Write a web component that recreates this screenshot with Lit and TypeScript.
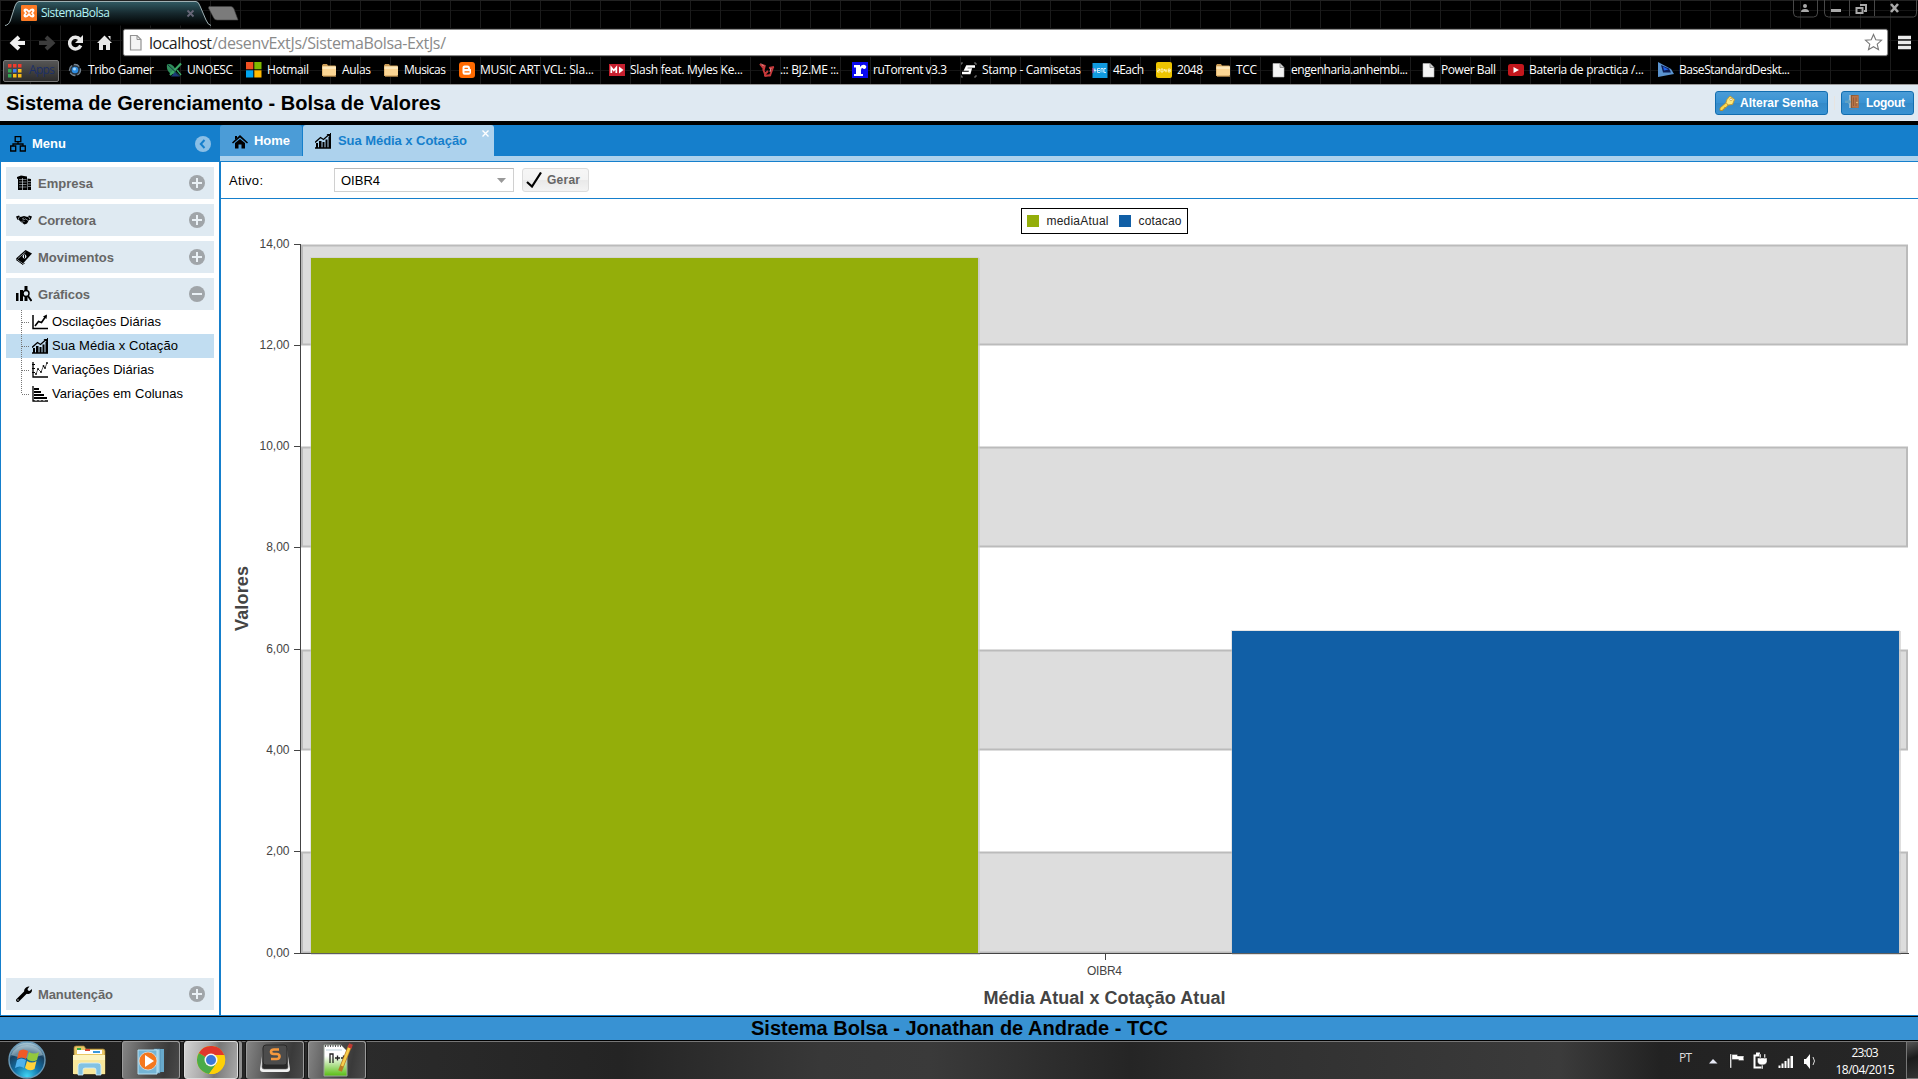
import { LitElement, html, svg, css, TemplateResult } from "lit";
import { customElement, property } from "lit/decorators.js";
import { classMap } from "lit/directives/class-map.js";

const icon = (body: TemplateResult, w = 16, h = 16) =>
  html`<svg width=${w} height=${h} viewBox="0 0 ${w} ${h}">${body}</svg>`;

const folder = svg`<path d="M1 3.5 2 2h4l1 1.5h7.5V14H1z" fill="#c99a55"/><path d="M1.500 4.500H15V13.500H1.500z" fill="#fbd593"/><path d="M1.500 4.500H15V7H1.500z" fill="#fde6b8"/><path d="M2 14.500h13" stroke="#8a6a3a"/>`;
const page = svg`<path d="M3 1.500h7l4 4V15H3z" fill="#f4f4f4" stroke="#bbb" stroke-width=".6"/><path d="M10 1.500v4h4" fill="#ccc" stroke="#888" stroke-width=".8"/>`;
const growth = svg`<path d="M0 15h16" stroke="#000" stroke-width="1.500"/><path d="M1 10h2v5H1zM4 8h2.500v7H4zM7.500 9h2v6h-2zM10.500 6.500h2V15h-2zM13.500 4H15v11h-1.500z"/><path d="M0 9.500 5.500 4.500 8.500 6.500l5-4.500" fill="none" stroke="#000" stroke-width="1.300"/><path d="M11.500 1H15v3.500z"/><path d="M15.500 0v15" stroke="#000"/>`;

/** Single line of text spread over a given advance width. */
@customElement("fit-text")
class FitText extends LitElement {
  @property({ type: Number }) w = 0;
  @property() text = "";
  static styles = css`
    :host { display: inline-block; white-space: pre; }
    span { display: inline-block; }
  `;
  firstUpdated() {
    const el = this.renderRoot.querySelector("span") as HTMLElement;
    const n = this.text.length - 1;
    if (this.w && n > 0) {
      const gap = (this.w - el.getBoundingClientRect().width) / n;
      el.style.letterSpacing = `${gap}px`;
      el.style.marginRight = `${-gap}px`;
    }
  }
  render() {
    return html`<span>${this.text}</span>`;
  }
}

interface Bookmark { text: string; w: number; slot: number; art: TemplateResult; }

const bookmarks: Bookmark[] = [
  { text: "Tribo Gamer", w: 66, slot: 99, art: svg`<circle cx="8" cy="8" r="5.500" fill="#27323c" stroke="#76838f" stroke-width="1.300" stroke-dasharray="6 2"/><circle cx="8" cy="8" r="3.300" fill="#2d8be0"/><circle cx="7.500" cy="7" r="1.500" fill="#a5dbff"/>` },
  { text: "UNOESC", w: 46, slot: 80, art: svg`<path d="M1 2.500c3-1.500 6 0 8 4l1 6C4 13 0 9 1 2.500z" fill="#2f8c5a"/><path d="M15 1.500 4 13" stroke="#3aa866" stroke-width="2.200"/><path d="M9 10l5 4.500H5z" fill="#1b3a77"/><path d="M2 3l12 11" stroke="#123a40" stroke-width="1"/><path d="M11 8l4 5" stroke="#3aa866" stroke-width="1.300"/>` },
  { text: "Hotmail", w: 42, slot: 75, art: svg`<path d="M0 0h7.300v7.300H0z" fill="#f25022"/><path d="M8.300 0h7.200v7.300H8.300z" fill="#7fba00"/><path d="M0 8.300h7.300v7.200H0z" fill="#00a4ef"/><path d="M8.300 8.300h7.200v7.200H8.300z" fill="#ffb900"/>` },
  { text: "Aulas", w: 29, slot: 62, art: folder },
  { text: "Musicas", w: 42, slot: 76, art: folder },
  { text: "MUSIC ART VCL: Sla...", w: 114, slot: 150, art: svg`<rect width="16" height="16" rx="3" fill="#ff6a00"/><path d="M5.500 3.500h3q2.500 0 2.500 3 0 .7 1 .7v3.300q0 2.200-2.500 2.200h-4Q3.500 12.700 3.500 10.500v-5q0-2 2-2z" fill="#fff"/><path d="M6 6.300h2.500M6 9.900h4" stroke="#ff6a00" stroke-width="1.300" stroke-linecap="round"/>` },
  { text: "Slash feat. Myles Ke...", w: 113, slot: 150, art: svg`<rect y="2" width="16" height="12" fill="#c8202f"/><path d="M2.300 11V5.500L4.800 8.500 7.300 5.500V11" fill="none" stroke="#fff" stroke-width="1.700"/><path d="M10 4.500 14.500 8 10 11.500z" fill="#fff"/>` },
  { text: ".:: BJ2.ME ::.", w: 59, slot: 93, art: svg`<path d="M1 2l4 5 1-4M4 7l2 5 3-3M5 13.500h6l3-8M3 3l3 1M10 6l5-1M6 14l6-1" stroke="#c6383a" stroke-width="1.900" fill="none"/><path d="M2 1.500l3 3M12 6l-1 4" stroke="#f09a9a"/>` },
  { text: "ruTorrent v3.3", w: 74, slot: 109, art: svg`<rect width="16" height="16" fill="#0808f0"/><path d="M2 3h6v2q2-3 5-2 2 1 1 3-2 2-3.500 0-1.500 0-1.500 2v4h2v2H2v-2h2V5.500H2z" fill="#fff"/>` },
  { text: "Stamp - Camisetas", w: 99, slot: 131, art: svg`<path d="M0 3V1h2M13 1h2v2M15 13v2h-2M2 15H0v-2" stroke="#aaa" fill="none" stroke-width=".7"/><path d="M14 4.500H6L4.500 7.500h5L8.500 11H1" stroke="#fff" stroke-width="2.400" fill="none"/>` },
  { text: "4Each", w: 31, slot: 64, art: svg`<rect x=".5" y="1" width="15" height="15" fill="#109ae0"/><path d="M3 6.500v4M2 6.500v2h2.500M8 6.500H5.500v4H8M5.500 8.500H8M9 10.500v-4h2v4M14 6.500h-2v4h2" stroke="#d5efff" stroke-width=".9" fill="none"/><path d="M1 6v5" stroke="#d7308c"/>` },
  { text: "2048", w: 26, slot: 59, art: svg`<rect width="16" height="16" rx="2" fill="#edc400"/><path d="M1.500 7h2v1.500h-2V10h2M5 7h2v3H5zM8.500 7v1.800h2.300M10 7v3.300M12.200 7h2v3h-2zM12.200 8.500h2" stroke="#fff6c5" stroke-width=".9" fill="none"/>` },
  { text: "TCC", w: 21, slot: 55, art: folder },
  { text: "engenharia.anhembi...", w: 117, slot: 150, art: page },
  { text: "Power Ball", w: 55, slot: 88, art: page },
  { text: "Bateria de practica /...", w: 115, slot: 150, art: svg`<rect y="2" width="16" height="12" rx="2.500" fill="#c4171d"/><path d="M5.500 5 11 8l-5.500 3z" fill="#fff"/>` },
  { text: "BaseStandardDeskt...", w: 111, slot: 140, art: svg`<path d="M0 0 13 7 16 12 0 15z" fill="#5b94d0"/><path d="M3 3l8 3.500 2 4H5z" fill="#0c1c55"/><path d="M5 4.500l5.500 3-4.500 1z" fill="#1d5ee8"/>` },
];

@customElement("browser-chrome")
class BrowserChrome extends LitElement {
  static styles = css`
    :host {
      display: flex; flex-direction: column; height: 84px; border-bottom: 1px solid #9a9a9a; color: #fff;
      font-family: "Open Sans", "Noto Sans", sans-serif; font-size: 12px;
      background-color: #000;
      background-image: linear-gradient(90deg, #1b1b1b 1px, transparent 1px), linear-gradient(#151515 1px, transparent 1px);
      background-size: 30px 30px; background-position: 0 10px;
    }
    svg { display: block; flex: none; }
    .strip { display: flex; height: 28px; position: relative; box-sizing: border-box; border-top: 1px solid #222; }
    .tabs { position: absolute; left: 0; top: -1px; }
    .tab { display: flex; align-items: center; height: 24px; padding-left: 21px; position: relative; flex: 1; }
    .title { margin-left: 4px; color: #b4f3f4; width: 145px; font-size: 12px; }
    .win { margin-top: -1px; position: relative; }
    .bar { display: flex; height: 29px; align-items: center; }
    .nav { width: 123px; }
    .omni { flex: 1; height: 25px; background: #fff; border: 1px solid #8a8a8a; outline: 1px solid #111; border-radius: 2px; display: flex; align-items: center; font-size: 16px; color: #8a8a8a; }
    .omni .doc { margin: 0 6px 0 5px; }
    .omni b { color: #1d1d1d; font-weight: 400; }
    .omni .star { margin-left: auto; margin-right: 4px; }
    .menu { width: 30px; }
    .marks { display: flex; height: 27px; align-items: center; padding-left: 3px; }
    .marks fit-text { margin-top: -1px; }
    .apps { box-sizing: border-box; width: 56px; height: 22px; margin-right: 8px; border: 1px solid #777; border-radius: 2px; background: linear-gradient(#555, #2c2c2c); color: #1c2f66; display: flex; align-items: center; padding-left: 4px; gap: 7px; }
    .mark { display: flex; align-items: center; gap: 5px; flex: none; height: 22px; padding-bottom: 1px; }
  `;
  render() {
    const dots = ["#f03c2e", "#f03c2e", "#f03c2e", "#35a853", "#3d7ff0", "#f8bc18", "#35a853", "#f8bc18", "#f8bc18"];
    return html`
      <div class="strip">
        <svg class="tabs" width="242" height="27">
          <defs><linearGradient id="tg" x2="0" y2="1"><stop stop-color="#315a63"/><stop offset=".5" stop-color="#16282d"/><stop offset="1" stop-color="#000"/></linearGradient></defs>
          <path d="M5 25.500Q9 25 10.500 20L15 6Q16.500 1.500 19 1.500H196Q198.500 1.500 200 6L206 20Q208 25 211 25.500" fill="url(#tg)" stroke="#9fb0b3"/>
          <path d="M209 6.500h22q2 0 3 2.500l4 11h-21q-2.500 0-3.500-2.500L208.500 8z" fill="#7b7b7b" stroke="#444" stroke-width=".6"/>
        </svg>
        <div class="tab">
          ${icon(svg`<rect width="16" height="16" rx="1" fill="#fb7a24"/><path d="M4.500 3.500q2 0 3.500 2 1.500-2 3.500-2 2 0 2 2 0 1.300-1.500 2.500 1.500 1.200 1.500 2.500 0 2-2 2-2 0-3.500-2-1.500 2-3.500 2-2 0-2-2Q2.500 9.200 4 8 2.500 6.800 2.500 5.500q0-2 2-2z" fill="#fff"/><path d="M5 6l2 2-2 2M11 6 9 8l2 2" stroke="#fb7a24" stroke-width="1.300" fill="none"/>`)}
          <span class="title"><fit-text w="69" text="SistemaBolsa"></fit-text></span>
          ${icon(svg`<path d="M1.500 2.500l6 6M7.500 2.500l-6 6" stroke="#667" stroke-width="1.800"/>`, 10, 10)}
        </div>
        <svg class="win" width="126" height="19">
          <path d="M1.500 0v13q0 4 4 4h16q4 0 4-4V0M32.500 0v13q0 4 4 4h85q3 0 3-4V0M57.500 0v16M82.500 0v16" fill="none" stroke="#474747"/>
          <g fill="#a9a9a9"><circle cx="13" cy="6" r="2"/><path d="M9 12q0-3 4-3t4 3zM39 9h10v3H39z"/></g>
          <path d="M64.500 8h6v5h-6zM68 5h6v6h-2" fill="none" stroke="#a9a9a9" stroke-width="2"/>
          <path d="M99 4l7 8M106 4l-7 8" stroke="#a9a9a9" stroke-width="2.600"/>
        </svg>
      </div>
      <div class="bar">
        <svg class="nav" height="29">
          <g fill="none" stroke-width="4"><path d="M25 15H13M19 9l-6.500 6 6.500 6" stroke="#f0f0f0"/><path d="M39 15h12M46 9l6.500 6-6.500 6" stroke="#3c3c3c"/><path d="M80 11.500a5.800 5.800 0 1 0 .700 6" stroke="#e8e8e8" stroke-width="3.500"/></g>
          <path d="M83 7v8h-8z" fill="#e8e8e8"/>
          <path d="M104.500 7.500 112 15h-2v7h-4v-5h-3v5h-4v-7h-2zM108 8h2.500v4z" fill="#e8e8e8"/>
        </svg>
        <div class="omni">
          <svg class="doc" width="14" height="18"><path d="M1.500 1.500H8L12 5.500V16H1.500z" fill="#f4f4f4" stroke="#929292" stroke-width="1.200"/><path d="M8 1.500v4h4" fill="none" stroke="#929292"/></svg>
          <b><fit-text w="63" text="localhost"></fit-text></b><fit-text w="234" text="/desenvExtJs/SistemaBolsa-ExtJs/"></fit-text>
          <svg class="star" width="19" height="19"><path d="M9.500 1.500l2.300 5.300 5.700.5-4.300 3.800 1.300 5.600-5-3-5 3 1.300-5.600L1.500 7.300l5.700-.5z" fill="#fff" stroke="#777" stroke-width="1.100"/></svg>
        </div>
        <svg class="menu" height="29"><path d="M10 9.500h13M10 14.500h13M10 19.500h13" stroke="#eaeaea" stroke-width="3.700"/></svg>
      </div>
      <div class="marks">
        <div class="apps">
          ${icon(svg`${dots.map((c, i) => svg`<rect x=${(i % 3) * 5} y=${Math.floor(i / 3) * 5} width="3.500" height="3.500" fill=${c}/>`)}`, 14, 14)}
          <fit-text w="26" text="Apps"></fit-text>
        </div>
        ${bookmarks.map((b) => html`<div class="mark" style="width:${b.slot}px">${icon(b.art)}<fit-text .w=${b.w} .text=${b.text}></fit-text></div>`)}
      </div>`;
  }
}

const sectionIcons: Record<string, TemplateResult> = {
  Empresa: svg`<path d="M1 2 5 .500l6 1V15H2V4L1 3.500zM11.500 3.500 15 4v11h-3.500z"/><path d="M3 4.500h7.500M3 7h7.500M3 9.500h7.500M3 12h7.500M12 6.500h3M12 9h3M12 11.500h3" stroke="#dfeaf2" stroke-width=".5"/><path d="M6.500 3v12" stroke="#dfeaf2" stroke-width=".6"/>`,
  Corretora: svg`<path d="M0 4.500 3 3.500 4.500 5 8 4l3.500 1L13 3.500l3 1L14.500 8 13 8l-2 3.500-2.500 1L5 10 2.500 7.500 1.500 8z"/><path d="M3.500 4.500 2 7.500M12.500 4.500 14 7.500M8 5.500 6.500 7l2 .5 1-.7 3 2M5.500 9.500l1.500 1M7 8.500l1.500 1.500" stroke="#dfeaf2" stroke-width=".6" fill="none"/>`,
  Movimentos: svg`<path d="M0 9.500 9.500 1 16 4.500 7 14.500z"/><path d="M0 10.500 7 15.500 8.500 14" stroke="#000" fill="none"/><circle cx="8.500" cy="7.500" r="1.900" fill="#dfeaf2"/><path d="M8.500 6v3" stroke="#000"/><path d="M2 9.500 9.500 3" stroke="#dfeaf2" stroke-width=".6"/>`,
  "Gráficos": svg`<path d="M0 7h2.500v8H0zM4 4h3v11H4zM8.500 0h3v5h-3zM8.500 11h3v4h-3z"/><circle cx="10" cy="7.500" r="3" fill="#dfeaf2" stroke="#000" stroke-width="1.500"/><path d="M12 10l3.500 5" stroke="#000" stroke-width="2"/>`,
  "Manutenção": svg`<path d="M1.800 14.200 10 6" stroke="#000" stroke-width="3.400" stroke-linecap="round"/><path d="M13.500.500 11.500 3l.500 1.500 1.500.500L16 3q.3 4.500-3.500 5-3 .3-4-2T9.500 2q1.500-2 4-1.500z"/><circle cx="2" cy="14" r=".7" fill="#dfeaf2"/>`,
};

const treeIcons: TemplateResult[] = [
  svg`<path d="M1 1v13.500h15" stroke="#000" stroke-width="1.500" fill="none"/><path d="M3 12l3.500-4.500 3 1L14 2" fill="none" stroke="#000" stroke-width="1.600"/><path d="M11 2.500 15 .500 14.500 5z"/>`,
  growth,
  svg`<path d="M1 0v15h15" stroke="#000" stroke-width="1.300" fill="none"/><path d="M0 2.500h3M0 6.500h3M0 10.500h3" stroke="#000"/><path d="M4 12l2-5 3 3 2.500-6L13 6l2-5" fill="none" stroke="#333" stroke-width=".8"/><g><circle cx="4" cy="12" r=".9"/><circle cx="6" cy="7" r=".9"/><circle cx="9" cy="10" r=".9"/><circle cx="11.500" cy="4" r=".9"/><circle cx="13" cy="6" r=".9"/><circle cx="15" cy="1" r=".9"/></g>`,
  svg`<path d="M1 0v15h15" stroke="#000" stroke-width="1.300" fill="none"/><path d="M2 3h5M2 6h7M2 9h10M2 12h13" stroke="#000" stroke-width="2.200"/><path d="M4 13.500v1.500M8 13.500v1.500M12 13.500v1.500" stroke="#fff"/>`,
];

@customElement("side-menu")
class SideMenu extends LitElement {
  static styles = css`
    :host { display: flex; flex-direction: column; box-sizing: border-box; width: 220px; border: 1px solid #157fcc; border-top: 0; background: #fff; }
    svg { display: block; flex: none; }
    .head { height: 37px; margin: 0 -1px; background: #157fcc; color: #fff; font-weight: 700; display: flex; align-items: center; padding: 0 10px; box-sizing: border-box; gap: 6px; }
    .head .tool { margin-left: auto; margin-right: -1px; }
    .body { flex: 1; display: flex; flex-direction: column; padding: 5px 4px 5px 5px; }
    .sec { box-sizing: border-box; height: 32px; width: 208px; background: #dfeaf2; margin-bottom: 5px; display: flex; align-items: center; padding: 0 9px 0 10px; gap: 6px; color: #666; font-weight: 700; flex: none; }
    .sec fit-text { padding-top: 1px; }
    .sec .tool { margin-left: auto; }
    .sec.open { margin-bottom: 0; }
    .sec.last { margin: auto 0 0; }
    .row { height: 24px; display: flex; align-items: center; width: 208px; color: #000; }
    .row.sel { background: #c1ddf1; }
    .row fit-text { margin-left: 4px; }
  `;
  section(name: string, w: number, open = false, last = false) {
    return html`<div class=${classMap({ sec: true, open, last })}>
      ${icon(sectionIcons[name])}<fit-text .w=${w} .text=${name}></fit-text>
      <svg class="tool" width="16" height="16"><circle cx="8" cy="8" r="8" fill="#a0a5a9"/><path d=${open ? "M3 8h10" : "M3 8h10M8 3v10"} stroke="#eaf1f6" stroke-width="2"/></svg>
    </div>`;
  }
  render() {
    const rows: [string, number][] = [["Oscilações Diárias", 109], ["Sua Média x Cotação", 126], ["Variações Diárias", 102], ["Variações em Colunas", 131]];
    return html`
      <div class="head">
        ${icon(svg`<path d="M5.200.700h5.600v5H5.200zM.700 10h5v5h-5zM10.300 10h5v5h-5zM8 6v2M3 10V8h10v2" fill="none" stroke="#000" stroke-width="1.300"/>`)}
        <fit-text w="34" text="Menu"></fit-text>
        <svg class="tool" width="16" height="16"><circle cx="8" cy="8" r="8" fill="#8abfe6"/><path d="M9.500 4 5.800 8l3.700 4" fill="none" stroke="#157fcc" stroke-width="2"/></svg>
      </div>
      <div class="body">
        ${this.section("Empresa", 55)}${this.section("Corretora", 58)}${this.section("Movimentos", 76)}${this.section("Gráficos", 52, true)}
        ${rows.map(([text, w], i) => html`<div class=${classMap({ row: true, sel: i === 1 })}>
          <svg width="26" height="24"><path d="M15.500 0V${i === 3 ? 12 : 24}M16 12.500h8" stroke="#777" stroke-dasharray="1 1" fill="none"/></svg>
          ${icon(treeIcons[i])}<fit-text .w=${w} .text=${text}></fit-text></div>`)}
        ${this.section("Manutenção", 75, false, true)}
      </div>`;
  }
}

@customElement("column-chart")
class ColumnChart extends LitElement {
  static styles = css`
    :host { display: block; }
    svg { display: block; font-family: "Liberation Sans", Arial, sans-serif; }
    .lbl { font-size: 12px; fill: #444; }
    .leg { font-size: 12px; fill: #222; }
    .ttl { font-size: 18px; font-weight: 700; fill: #444; }
  `;
  render() {
    const ticks = [244.5, 345.5, 446.5, 547.5, 649.5, 750.5, 851.5, 953.5];
    const names = ["14,00", "12,00", "10,00", "8,00", "6,00", "4,00", "2,00", "0,00"];
    const bar = (x: number, y: number, w: number, fill: string) => svg`
      <rect x=${x} y=${y} width=${w} height=${953 - y} fill="none" stroke="#c8c8c8" stroke-opacity=".45" stroke-width="2"/>
      <rect x=${x + 1} y=${y + 1} width=${w} height=${953 - y} fill="none" stroke="#c8c8c8" stroke-opacity=".6" stroke-width="2"/>
      <rect x=${x} y=${y} width=${w} height=${953 - y} fill=${fill}/>`;
    return html`<svg width="1697" height="816" viewBox="221 199 1697 816">
      ${[0, 2, 4, 6].map((i) => svg`<rect x="302" y=${ticks[i] + 1} width="1605" height=${ticks[i + 1] - ticks[i] - 2} fill="#ddd" stroke="#bbb" stroke-width="2"/>`)}
      <path d="M300.500 244V954M300 953.500H1909M1105.500 954v6" stroke="#444" fill="none"/>
      ${ticks.map((y, i) => svg`<path d="M294 ${y}h6" stroke="#444"/><text class="lbl" x="289.500" y=${y + 3.500} text-anchor="end">${names[i]}</text>`)}
      ${bar(311, 258, 667, "#94ae0a")}${bar(1232, 631, 667, "#115fa6")}
      <path d="M300 953.500H1909" stroke="#444" stroke-opacity=".75"/>
      <rect x="1021.500" y="208.500" width="166" height="25" fill="#fff" stroke="#000"/>
      <rect x="1027" y="215" width="12" height="12" fill="#94ae0a"/><rect x="1119" y="215" width="12" height="12" fill="#115fa6"/>
      <text class="leg" x="1046.500" y="225" textLength="62">mediaAtual</text><text class="leg" x="1138.500" y="225" textLength="43">cotacao</text>
      <text class="lbl" x="1087" y="975" textLength="35">OIBR4</text>
      <text class="ttl" x="983.500" y="1004" textLength="242">Média Atual x Cotação Atual</text>
      <text class="ttl" transform="translate(248 631) rotate(-90)" textLength="65">Valores</text>
    </svg>`;
  }
}

@customElement("task-bar")
class TaskBar extends LitElement {
  static styles = css`
    :host { display: flex; box-sizing: border-box; height: 39px; border-top: 1px solid #000; color: #fff; font: 12px "Open Sans", "Noto Sans", sans-serif;
      background: linear-gradient(#777 1px, transparent 1px), linear-gradient(90deg, #1f1f1f 0, #2b2b2b 360px, #242424 620px, #383838 820px, #3a3a3a 930px, #252525 1130px, #303030 1250px, #3b3b3b 1560px, #222 1660px, #272727 100%); }
    svg { display: block; }
    .orb { width: 62px; }
    .pin { width: 60px; }
    .app { box-sizing: border-box; width: 58px; height: 38px; margin-right: 4px; border: 1px solid #9b9b9b; border-bottom: 1px solid #777; border-radius: 3px; background: linear-gradient(100deg, #858585 0, #515151 45%, #3a3a3a 75%, #4a4a4a); box-shadow: 0 0 0 1px #151515; display: flex; justify-content: center; }
    .app.on { width: 54px; margin-right: 8px; background: linear-gradient(100deg, #d4d4d4, #a8a8a8 40%, #777 60%, #aaa); box-shadow: 0 0 0 1px #151515, 4px 0 0 #8e8e8e, 5px 0 0 #222; border-color: #ddd; }
    .tray { margin-left: auto; display: flex; }
    .lang { color: #ddd; padding-top: 9px; width: 29px; line-height: 16px; }
    .clock { width: 60px; margin-left: 16px; margin-right: 11px; display: flex; flex-direction: column; align-items: center; padding-top: 3px; line-height: 17px; }
    .show { box-sizing: border-box; width: 12px; border: 1px solid #777; border-right: 0; background: linear-gradient(160deg, #555, #1b1b1b 45%, #333); }
  `;
  render() {
    return html`
      <svg class="orb" height="38">
        <defs><radialGradient id="o" cx=".5" cy=".95" r=".9"><stop stop-color="#3fd6f5"/><stop offset=".4" stop-color="#1272a8"/><stop offset=".75" stop-color="#184060"/><stop offset="1" stop-color="#a0c0d0"/></radialGradient></defs>
        <circle cx="27" cy="19" r="18" fill="url(#o)" stroke="#6a9ab8" stroke-width="1.400"/><path d="M11 14a17 15 0 0 1 32 0q-16 6-32 0z" fill="#c8dfe9" opacity=".45"/>
        <path d="M19 10q4-3 9 0l-2 8q-4-3-9 0z" fill="#ef5a26"/><path d="M29 11q5 3 10 0l-2 8q-5 3-10-1z" fill="#93c83d"/><path d="M17 19q4-3 9 0l-2 8q-4-3-9 0z" fill="#4fb2ed"/><path d="M27 20q5 3 9.500 0l-2 8q-5 3-9.500-1z" fill="#ffd23c"/>
      </svg>
      <svg class="pin" height="38">
        <path d="M12 7q0-2 2-2h8l2 3h17q2 0 2 2v23H12z" fill="#e9c766" stroke="#9c7e34" stroke-width=".7"/><path d="M15 9h25v4H15z" fill="#fff"/><path d="M15 7h4v2h-4z" fill="#37ad46"/><path d="M23 8h5v2h-5z" fill="#dd4c32"/><path d="M31 10h7v2h-7z" fill="#3a98db"/>
        <path d="M11 14h32v19H11z" fill="#f8e79b"/><path d="M11 14h32v5H11z" fill="#fdf3bf"/><path d="M16 34V25q0-3 3-3h17q3 0 3 3v9h-5v-5q0-2-2-2h-9q-2 0-2 2v5z" fill="#82c2e3" stroke="#d7f0fb" stroke-width=".8"/>
      </svg>
      <div class="app"><svg width="28" height="36"><path d="M20 7h7v23h-7z" fill="#68a9cb"/><path d="M17 7h6v24h-6z" fill="#9fd1e9" stroke="#4584a7" stroke-width=".6"/><path d="M1 8h19v24H1z" fill="#75b5d6" stroke="#b8e0f1"/><circle cx="11" cy="19" r="9" fill="#f4781f" stroke="#d9dfe2" stroke-width=".8"/><path d="M8 13l9 6-9 6z" fill="#fff"/></svg></div>
      <div class="app on"><svg width="30" height="36"><circle cx="15" cy="18" r="14" fill="#fdd007"/><path d="M15 18 2.900 11A14 14 0 0 0 13 31.900L21 21z" fill="#4bab49"/><path d="M15 18 2.900 11A14 14 0 0 1 28.200 13H15z" fill="#e0372c"/><path d="M28.200 13H15l6 8-8 10.900A14 14 0 0 0 28.200 13z" fill="#fdd007"/><circle cx="15" cy="18" r="6.500" fill="#f5f5f5"/><circle cx="15" cy="18" r="5" fill="#3b78d8"/></svg></div>
      <div class="app"><svg width="32" height="36"><path d="M4 8h24l3 19q0 3-3 3H4q-3 0-3-3z" fill="#f1f1f1"/><path d="M4 5h24l1 20q0 2-2 2H5q-2 0-2-2z" fill="#292929" stroke="#666" stroke-width=".6"/><rect x="4" y="3" width="24" height="20" rx="3" fill="#4c4c4c" stroke="#292929"/><path d="M20 7.500h-5q-3 0-3 2.200T15 12h2.500q3 0 3 2.400T17.500 17H12" stroke="#f6983d" stroke-width="2.600" fill="none"/></svg></div>
      <div class="app"><svg width="32" height="36"><defs><linearGradient id="n" x2="0" y2="1"><stop offset=".35" stop-color="#fff"/><stop offset="1" stop-color="#57bd11"/></linearGradient></defs><path d="M3 3h17l6 6v25H3z" fill="url(#n)" stroke="#9ba59b"/><path d="M4 4h16" stroke="#555" stroke-width="2" stroke-dasharray="1 1.500"/><path d="M5 8h16" stroke="#bad1da"/><path d="M9 21v-9h3v9M14 16h5M16.500 13.500v5M20 16h5M22.500 13.500v5" stroke="#222" stroke-width="1.300" fill="none"/><path d="M29 4 21 24l-2 5" stroke="#b77b25" stroke-width="4"/><path d="M29 4 21 24" stroke="#f6cd4b" stroke-width="2.500"/><path d="M30 2l-1.500 4" stroke="#bf3932" stroke-width="4"/></svg></div>
      <div class="tray">
        <div class="lang"><fit-text w="13" text="PT"></fit-text></div>
        <svg width="111" height="38">
          <path d="M1 22.500l4-4.500 4.500 4.500z" fill="#e7e9f5"/>
          <g fill="#fff"><path d="M22 13h1.500v14H22zM24 13.500h5.500V15H36q-1 2.500 0 4.500h-5.500v-1H24z" stroke="#111" stroke-width=".3"/>
          <path d="M70.500 24.500h2V27h-2zM73.500 22.500h2V27h-2zM76.500 20h2v7h-2zM79.500 17.500h2V27h-2zM82.500 15H85v12h-2.500z"/>
          <path d="M96 18h2l4-5v15l-4-5h-2z"/></g>
          <path d="M105 16q3 4 0 8" stroke="#ddd" fill="none"/>
          <path d="M53 14.500h-6.500v12H54M48 12.500h4" stroke="#fff" stroke-width="2" fill="none"/><path d="M49.500 17H59v4q-1 3-4.800 3T49.500 21zM51.500 13H53v4h-1.500zM56 13h1.500v4H56zM53.500 24H55v4h-1.500z" fill="#fff" stroke="#222" stroke-width=".4"/>
        </svg>
        <div class="clock"><fit-text w="27" text="23:03"></fit-text><fit-text w="59" text="18/04/2015"></fit-text></div>
        <div class="show"></div>
      </div>`;
  }
}

@customElement("app-root")
class AppRoot extends LitElement {
  static styles = css`
    :host { display: flex; flex-direction: column; width: 1918px; height: 1079px; overflow: hidden; background: #fff; color: #000; font: 13px/16px "Liberation Sans", Arial, sans-serif; }
    svg { display: block; flex: none; }
    .top { height: 36px; background: #dfe9f2; border-bottom: 4px solid #000; display: flex; align-items: center; padding: 0 4px 0 6px; flex: none; }
    .name { font-size: 20px; font-weight: 700; line-height: 24px; }
    .btn { box-sizing: border-box; height: 24px; border: 1px solid #126daf; border-radius: 3px; background: linear-gradient(#4b9cd7, #3892d3 50%, #358ac8 51%, #3892d3); color: #fff; font: 700 12px/16px "Liberation Sans", Arial, sans-serif; display: flex; align-items: center; padding: 0 3px; gap: 5px; }
    .btn.key { width: 113px; margin-left: auto; }
    .btn.out { width: 73px; }
    .sep { width: 1px; height: 14px; background: #e8e4e0; margin: 0 6px; }
    .mid { flex: 1; display: flex; min-height: 0; }
    .main { flex: 1; display: flex; flex-direction: column; min-width: 0; }
    .tabs { height: 31px; background: #157fcc; display: flex; border-bottom: 5px solid #add2ed; box-shadow: 0 1px 0 #157fcc; flex: none; font-weight: 700; }
    .tab { box-sizing: border-box; display: flex; gap: 6px; padding: 8px 0 0 12px; background: #4b9cd7; color: #fff; border-radius: 3px 3px 0 0; }
    .home { width: 82px; margin-right: 1px; }
    .tab fit-text { line-height: 15px; }
    .cur { width: 191px; background: #add2ed; color: #157fcc; gap: 7px; position: relative; }
    .close { position: absolute; right: 5px; top: 5px; }
    .panel { flex: 1; border-left: 1px solid #157fcc; border-bottom: 1px solid #157fcc; margin-top: 1px; }
    .tool { height: 36px; border-bottom: 1px solid #157fcc; display: flex; align-items: center; padding-left: 8px; }
    .tool > fit-text { width: 105px; padding-top: 1px; }
    .combo { box-sizing: border-box; width: 180px; height: 24px; border: 1px solid #d0d0d0; border-top-color: #b8b8b8; display: flex; align-items: center; justify-content: space-between; padding: 0 7px 0 6px; margin-right: 8px; }
    .combo fit-text { padding-top: 1px; }
    .btn.go { width: 67px; background: linear-gradient(#f6f6f6, #f3f3f3 50%, #e9e9e9 51%, #f3f3f3); border-color: #dcdcdc; color: #666; }
    .foot { height: 23px; border-top: 1px solid #000; background: #3892d3; display: flex; justify-content: center; font-size: 20px; font-weight: 700; line-height: 23px; flex: none; padding-left: 1px; }
    browser-chrome, task-bar { flex: none; }
  `;
  render() {
    return html`
      <browser-chrome></browser-chrome>
      <header class="top">
        <fit-text class="name" w="435" text="Sistema de Gerenciamento - Bolsa de Valores"></fit-text>
        <div class="btn key">${icon(svg`<path d="M8.500 6.500 1 13v2.500h3V14h1.500v-1.500H7L10 9z" fill="#fbd950" stroke="#b98a22" stroke-width=".8"/><path d="M8 4.500 11 1l4.500 3.500-2 5-4.500.5-2-2.500z" fill="#fde97c" stroke="#c5952a" stroke-width=".9"/><circle cx="12" cy="4.500" r="1.200" fill="#fff" stroke="#b98a22" stroke-width=".6"/>`)}<fit-text w="78" text="Alterar Senha"></fit-text></div>
        <div class="sep"></div>
        <div class="btn out">${icon(svg`<path d="M5 0h8.500v13H5z" fill="#8c5a34"/><path d="M7 1 13.500.500v12.500L7 12.500z" fill="#b9744a"/><path d="M8.500 2.500v8.500M11 2.500v8.500" stroke="#8d5530" stroke-width=".8"/><path d="M5 0v13" stroke="#c9d2d8" stroke-width="1.300"/><path d="M0 5.500h3v-2L6 7 3 9.500V8H0z" fill="#5ea0c4"/><circle cx="12" cy="7.500" r=".8" fill="#f4d080"/><path d="M5 14.500h8" stroke="#6b86a0" stroke-opacity=".6"/>`)}<fit-text w="39" text="Logout"></fit-text></div>
      </header>
      <div class="mid">
        <side-menu></side-menu>
        <div class="main">
          <div class="tabs">
            <div class="tab home">${icon(svg`<path d="M0 9.500 8 2l8 7.500-1 1L8 4.500 1 10.500z"/><path d="M3 10 8 6l5 4v5.500H9.500v-4h-3v4H3zM3 3h2v2L3 6.800z"/>`)}<fit-text w="36" text="Home"></fit-text></div>
            <div class="tab cur">${icon(growth)}<fit-text w="129" text="Sua Média x Cotação"></fit-text>
              <svg class="close" width="7" height="7"><path d="M.5.500l6 6M6.500.500l-6 6" stroke="#fff" stroke-width="1.400"/></svg></div>
          </div>
          <div class="panel">
            <div class="tool">
              <fit-text w="34" text="Ativo:"></fit-text>
              <div class="combo"><fit-text w="39" text="OIBR4"></fit-text><svg width="9" height="5"><path d="M0 0h9L4.500 5z" fill="#999"/></svg></div>
              <div class="btn go">${icon(svg`<path d="M1 10l5 4.500L15 .500" fill="none" stroke="#000" stroke-width="2.200"/>`)}<fit-text w="33" text="Gerar"></fit-text></div>
            </div>
            <column-chart></column-chart>
          </div>
        </div>
      </div>
      <footer class="foot"><fit-text w="417" text="Sistema Bolsa - Jonathan de Andrade - TCC"></fit-text></footer>
      <task-bar></task-bar>`;
  }
}
